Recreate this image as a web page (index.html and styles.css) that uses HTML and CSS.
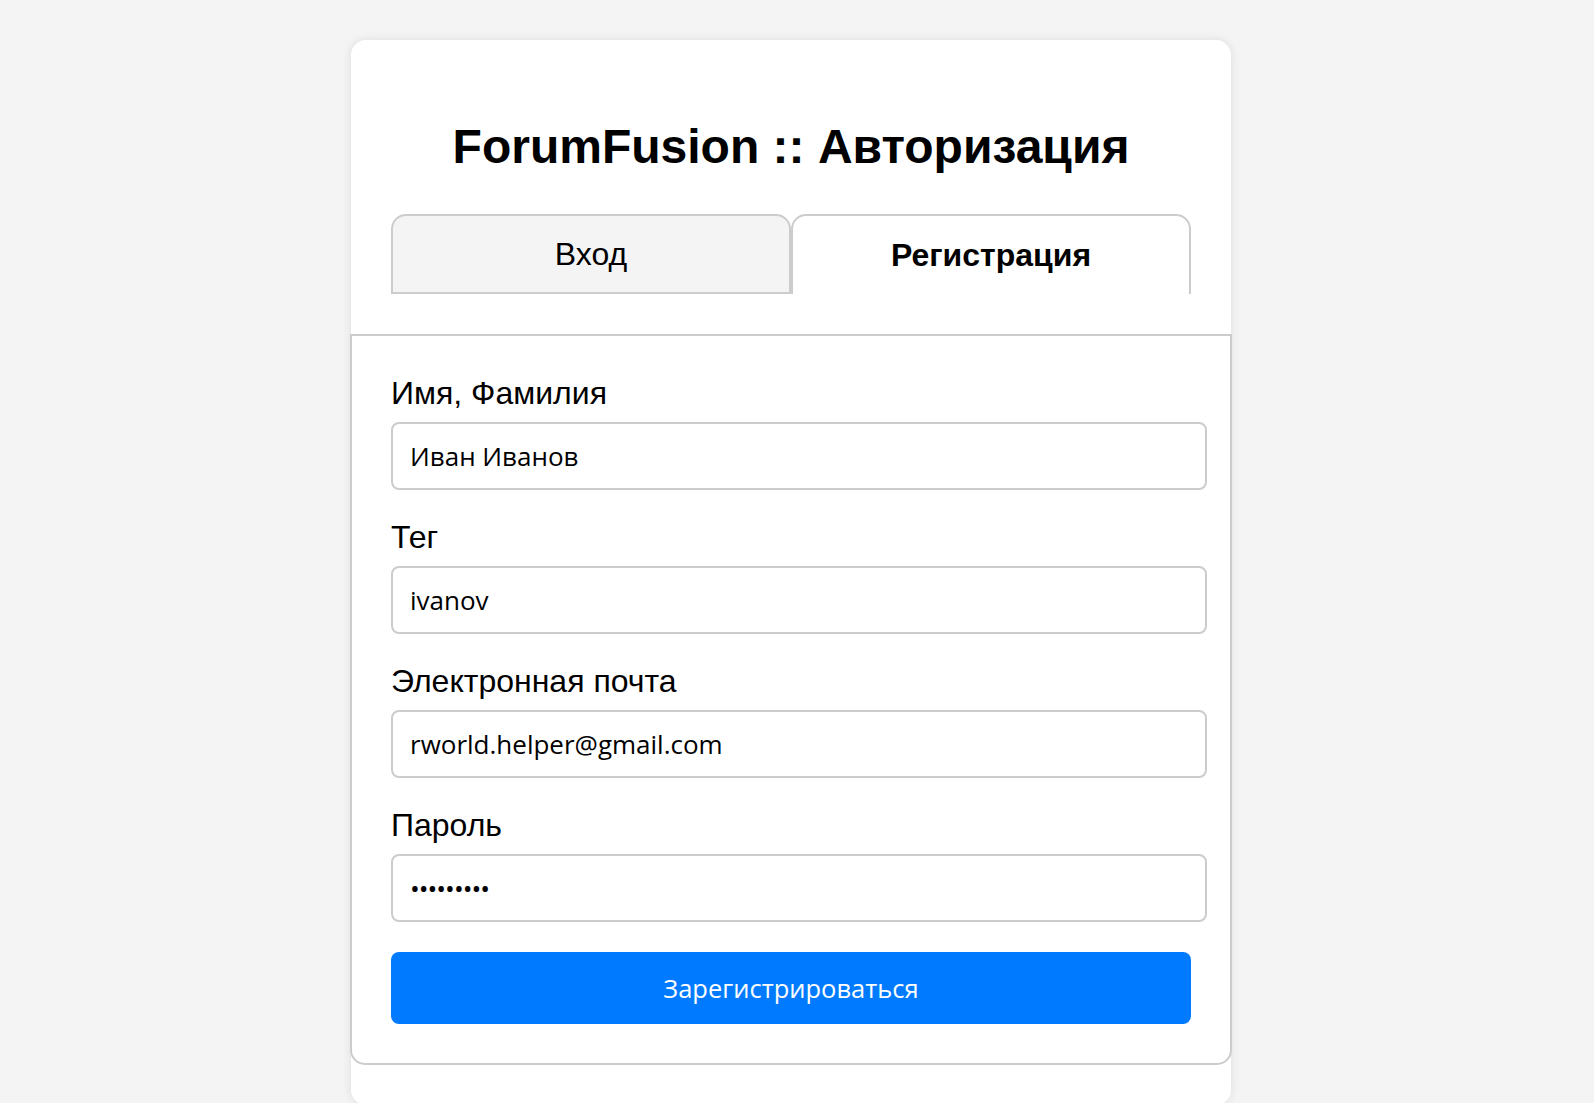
FILE: index.html
```html
<!DOCTYPE html>
<html lang="ru">
<head>
<meta charset="utf-8">
<title>ForumFusion :: Авторизация</title>
<link rel="stylesheet" href="styles.css">
</head>
<body>
<main class="card">
  <h1 class="title">ForumFusion :: Авторизация</h1>
  <div class="tabs">
    <button class="tab" type="button">Вход</button>
    <button class="tab tab-active" type="button">Регистрация</button>
  </div>
  <form class="panel">
    <div class="field">
      <label class="label" for="name">Имя, Фамилия</label>
      <input class="input" id="name" type="text" value="Иван Иванов">
    </div>
    <div class="field">
      <label class="label" for="tag">Тег</label>
      <input class="input" id="tag" type="text" value="ivanov">
    </div>
    <div class="field">
      <label class="label" for="email">Электронная почта</label>
      <input class="input" id="email" type="email" value="rworld.helper@gmail.com">
    </div>
    <div class="field">
      <label class="label" for="pass">Пароль</label>
      <input class="input input-password" id="pass" type="password" value="123456789">
    </div>
    <button class="submit" type="button">Зарегистрироваться</button>
  </form>
</main>
</body>
</html>
```

FILE: styles.css
```css
* {
  box-sizing: border-box;
}

html {
  overflow: hidden;
}

body {
  margin: 0;
  padding: 40px 12px 0 0;
  background: #f4f4f4;
  font-family: "Liberation Sans", Arial, sans-serif;
  color: #000;
}

.card {
  width: 880px;
  margin: 0 auto;
  padding: 40px;
  background: #fff;
  border-radius: 15px;
  box-shadow: 0 0 10px rgba(0, 0, 0, 0.1);
}

.title {
  margin: 39px 0 40px;
  font-size: 48px;
  font-weight: bold;
  text-align: center;
  line-height: normal;
}

.tabs {
  display: flex;
}

.tab {
  flex: 1;
  height: 80px;
  display: flex;
  align-items: center;
  justify-content: center;
  font-family: "Liberation Sans", Arial, sans-serif;
  font-size: 32px;
  color: #000;
  background: #f4f4f4;
  border: 2px solid #ccc;
  border-radius: 15px 15px 0 0;
  padding: 0;
}

.tab-active {
  background: #fff;
  font-weight: bold;
  border-bottom: none;
}

.panel {
  display: flex;
  flex-direction: column;
  gap: 29px;
  margin: 40px -41px 0;
  padding: 39px 39px 39px;
  border: 2px solid #ccc;
  border-radius: 0 0 15px 15px;
}

.field {
  display: flex;
  flex-direction: column;
  gap: 10px;
}

.label {
  font-size: 32px;
  line-height: normal;
}

.input {
  width: 816px;
  height: 68px;
  padding: 0 17px;
  border: 2px solid #ccc;
  border-radius: 8px;
  font-family: "Open Sans", "Noto Sans", sans-serif;
  font-size: 26px;
  color: #000;
  background: #fff;
  outline: none;
}

.input-password {
  letter-spacing: -1px;
}

.submit {
  display: block;
  width: 800px;
  height: 72px;
  margin-top: 1px;
  border: none;
  border-radius: 8px;
  background: #007bff;
  color: #fff;
  font-family: "Open Sans", "Noto Sans", sans-serif;
  font-size: 25.5px;
}
```
